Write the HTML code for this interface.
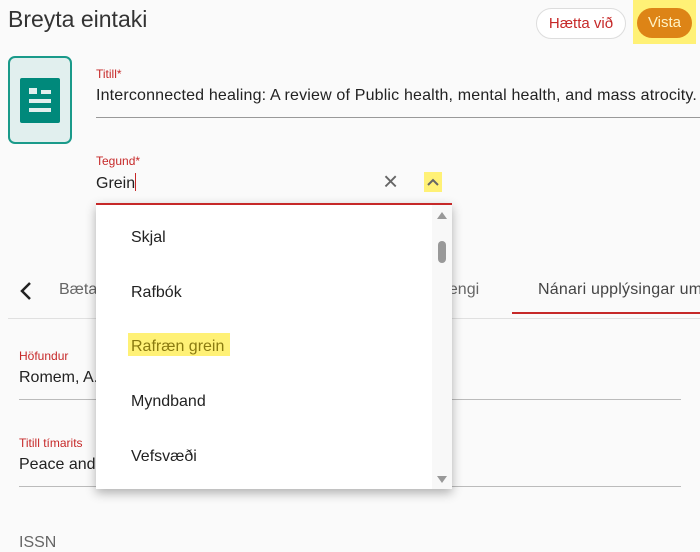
<!DOCTYPE html>
<html><head><meta charset="utf-8"><style>
body{margin:0;width:700px;height:552px;background:#fafafa;font-family:"Liberation Sans",sans-serif;position:relative;overflow:hidden;color:#222}
.a{position:absolute;white-space:nowrap}
.lbl{font-size:12px;color:#c62828}
.val{font-size:16px;color:#222}
.line{position:absolute;height:1px;background:#999}
</style></head><body>
<div class="a" style="left:8px;top:6px;font-size:23px;color:#333">Breyta eintaki</div>
<div class="a" style="left:536px;top:8px;width:88px;height:29px;border:1px solid #ddd;border-radius:16px;background:#fff;color:#c62828;font-size:15px;text-align:center;line-height:29px">Hætta við</div>
<div class="a" style="left:633px;top:0;width:63px;height:44px;background:#fff176"></div>
<div class="a" style="left:637px;top:8px;width:55px;height:30px;border-radius:16px;background:#dd8416;color:#fff3c4;font-size:15px;text-align:center;line-height:30px">Vista</div>

<div class="a" style="left:8px;top:56px;width:60px;height:84px;border:2px solid #1a9a8a;border-radius:7px;background:#e1efee"></div>
<svg class="a" style="left:20px;top:78px" width="40" height="46"><rect width="40" height="45" rx="2" fill="#00897b"/><rect x="9" y="10" width="8" height="6" fill="#e1efee"/><rect x="21" y="12" width="10" height="4" fill="#e1efee"/><rect x="9" y="21" width="22" height="4" fill="#e1efee"/><rect x="9" y="30" width="22" height="4" fill="#e1efee"/></svg>

<div class="a lbl" style="left:96px;top:67px">Titill*</div>
<div class="a val" style="left:96px;top:87px;letter-spacing:0.17px">Interconnected healing: A review of Public health, mental health, and mass atrocity.</div>
<div class="line" style="left:96px;top:117px;width:604px"></div>
<div class="a lbl" style="left:96px;top:154px">Tegund*</div>
<div class="a val" style="left:96px;top:173px">Grein<span style="display:inline-block;width:1px;height:18px;background:#c62828;vertical-align:-3px"></span></div>
<div class="a" style="left:383px;top:166px;font-size:26px;color:#666;font-weight:300">×</div>
<div class="a" style="left:424px;top:172px;width:18px;height:20px;background:#fff176"></div>
<svg class="a" style="left:427px;top:178px" width="12" height="8"><path d="M1 7 L6 2 L11 7" stroke="#666" stroke-width="2" fill="none"/></svg>

<svg class="a" style="left:18px;top:281px" width="14" height="20"><path d="M12 2 L4 10 L12 18" stroke="#222" stroke-width="2.5" fill="none"/></svg>
<div class="a val" style="left:59px;top:281px;color:#666">Bæta</div>
<div class="a val" style="left:440px;top:281px;color:#666">gengi</div>
<div class="a val" style="left:538px;top:281px;color:#444;letter-spacing:0.2px">Nánari upplýsingar um</div>
<div class="a" style="left:512px;top:312px;width:188px;height:2px;background:#c62828"></div>
<div class="a" style="left:8px;top:318px;width:692px;height:1px;background:#e0e0e0"></div>

<div class="a lbl" style="left:19px;top:349px">Höfundur</div>
<div class="a val" style="left:19px;top:369px">Romem, A.</div>
<div class="line" style="left:19px;top:399px;width:662px;background:#bbb"></div>
<div class="a lbl" style="left:19px;top:436px">Titill tímarits</div>
<div class="a val" style="left:19px;top:456px">Peace and</div>
<div class="line" style="left:19px;top:486px;width:662px;background:#bbb"></div>
<div class="a val" style="left:19px;top:534px;color:#666">ISSN</div>

<div class="a" style="left:96px;top:203px;width:356px;height:286px;background:#fff;box-shadow:0 4px 10px rgba(0,0,0,.3)">
<div style="position:absolute;left:0;top:0;width:356px;height:2px;background:#c62828"></div>
<div style="position:absolute;right:0;top:2px;width:20px;height:284px;background:#f8f8f8"></div>
<svg style="position:absolute;left:340px;top:7px" width="12" height="10"><path d="M1 9 L6 2 L11 9Z" fill="#999"/></svg>
<div style="position:absolute;left:342px;top:38px;width:8px;height:22px;border-radius:4px;background:#999"></div>
<svg style="position:absolute;left:340px;top:272px" width="12" height="10"><path d="M1 1 L6 8 L11 1Z" fill="#999"/></svg>
<div class="a val" style="left:35px;top:26px">Skjal</div>
<div class="a val" style="left:35px;top:81px">Rafbók</div>
<div class="a" style="left:32px;top:130px;width:102px;height:23px;background:#fff176"></div>
<div class="a val" style="left:35px;top:135px;color:#8a7a10">Rafræn grein</div>
<div class="a val" style="left:35px;top:190px">Myndband</div>
<div class="a val" style="left:35px;top:245px">Vefsvæði</div>
</div>
</body></html>
